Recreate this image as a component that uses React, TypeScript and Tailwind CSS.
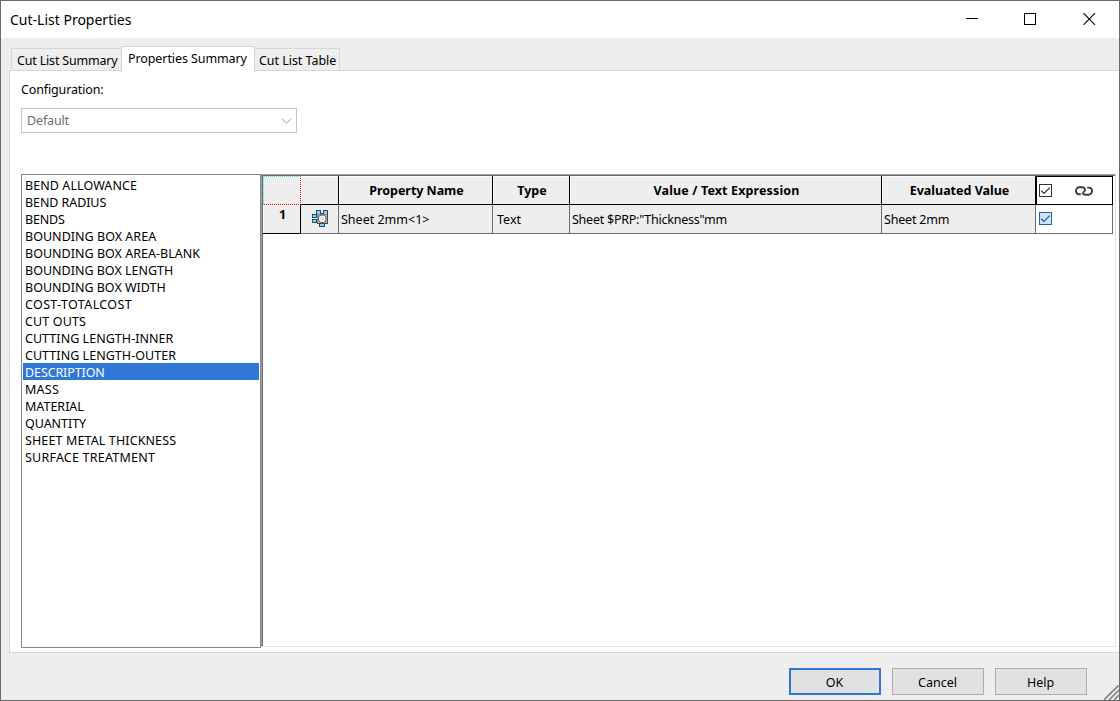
import React from "react";
import clsx from "clsx";

interface PropertyItem {
  name: string;
  tracking?: string;
}

const properties: PropertyItem[] = [
  { name: "BEND ALLOWANCE", tracking: "tracking-[0.08px]" },
  { name: "BEND RADIUS", tracking: "tracking-[-0.08px]" },
  { name: "BENDS", tracking: "tracking-[-0.2px]" },
  { name: "BOUNDING BOX AREA", tracking: "tracking-[0.03px]" },
  { name: "BOUNDING BOX AREA-BLANK", tracking: "tracking-[0.02px]" },
  { name: "BOUNDING BOX LENGTH" },
  { name: "BOUNDING BOX WIDTH" },
  { name: "COST-TOTALCOST", tracking: "tracking-[0.36px]" },
  { name: "CUT OUTS", tracking: "tracking-[0.14px]" },
  { name: "CUTTING LENGTH-INNER", tracking: "tracking-[0.04px]" },
  { name: "CUTTING LENGTH-OUTER", tracking: "tracking-[0.04px]" },
  { name: "DESCRIPTION", tracking: "tracking-[-0.1px]" },
  { name: "MASS", tracking: "tracking-[0.25px]" },
  { name: "MATERIAL" },
  { name: "QUANTITY", tracking: "tracking-[-0.05px]" },
  { name: "SHEET METAL THICKNESS", tracking: "tracking-[0.12px]" },
  { name: "SURFACE TREATMENT", tracking: "tracking-[0.22px]" },
];

const TitleBar: React.FC = () => (
  <header className="flex h-[37px] shrink-0 items-center justify-between bg-white pr-[23px] pl-[9px]">
    <h1 className="text-[14px] leading-5">Cut-List Properties</h1>
    <div className="flex items-center gap-[46px] pb-px">
      <button aria-label="Minimize">
        <svg width="12" height="12" className="block" shapeRendering="crispEdges">
          <path d="M0 5.5h12" stroke="#000" />
        </svg>
      </button>
      <button aria-label="Maximize">
        <svg width="12" height="12" className="block" shapeRendering="crispEdges">
          <rect x="0.5" y="0.5" width="11" height="11" fill="none" stroke="#000" />
        </svg>
      </button>
      <button aria-label="Close" className="ml-px">
        <svg width="13" height="12" className="block">
          <path d="M0.5 0.2 12 11.8M12 0.2 0.5 11.8" stroke="#000" strokeWidth="1.15" />
        </svg>
      </button>
    </div>
  </header>
);

const Tabs: React.FC = () => (
  <nav className="relative z-10 flex h-[25px] items-end pl-[10px]">
    <button className="h-[23px] w-[110px] border border-r-0 border-b-0 border-[#d6d6d6] pl-[5px] text-left tracking-[-0.18px] whitespace-nowrap">
      Cut List Summary
    </button>
    <button className="-mb-px h-[26px] w-[134px] border border-b-0 border-[#d6d6d6] bg-white pb-[3px] pl-[6px] text-left tracking-[-0.09px] whitespace-nowrap">
      Properties Summary
    </button>
    <button className="h-[23px] w-[85px] border border-b-0 border-l-0 border-[#d6d6d6] pl-[4px] text-left tracking-[-0.04px] whitespace-nowrap">
      Cut List Table
    </button>
  </nav>
);

const PropertyList: React.FC = () => (
  <ul className="h-[474px] w-[240px] shrink-0 border border-[#828790] px-px pt-px">
    {properties.map(({ name, tracking }) => (
      <li
        key={name}
        className={clsx(
          "h-[17px] pl-[2px] leading-[19px] whitespace-nowrap",
          tracking,
          name === "DESCRIPTION" && "bg-[#2f78d7] text-white"
        )}
      >
        {name}
      </li>
    ))}
  </ul>
);

const CutListIcon: React.FC = () => (
  <svg width="17" height="17" viewBox="0 0 17 17" className="ml-px" shapeRendering="crispEdges">
    <g fill="#8fd0f2" stroke="#1d4f73">
      <rect x="4.5" y="0.5" width="4" height="4" />
      <rect x="11.5" y="0.5" width="4" height="4" />
      <rect x="0.5" y="4.5" width="4" height="3" />
      <rect x="0.5" y="9.5" width="4" height="3" />
      <rect x="7.5" y="13.5" width="5" height="3" />
    </g>
    <path d="M8 3.5h4" stroke="#1d4f73" />
    <rect x="5" y="4" width="11" height="10" fill="#b4b4b4" />
    <path d="M5 4.5h10M5.5 4v9" stroke="#888" />
    <path d="M15.5 4v10M5 13.5h11" stroke="#4a4a4a" />
    <circle cx="10.2" cy="8.8" r="3.7" fill="#dcdcdc" stroke="#555" strokeWidth="1.1" shapeRendering="auto" />
    <circle cx="10.2" cy="8.8" r="2.7" fill="none" stroke="#fff" strokeWidth="1.1" shapeRendering="auto" />
  </svg>
);

const LinkIcon: React.FC = () => (
  <svg width="18" height="10" viewBox="0 0 18 10" fill="none" stroke="#3c3c3c" strokeWidth="1.9">
    <path d="M5.8 8.3H4.4C2.3 8.3 1 6.7 1 4.8S2.4 1.2 4.4 1.2h2.8c1.9 0 3.1 1.3 2.7 3.1-.2 1-.7 1.6-1.5 2" />
    <path d="M12.2 1.6h1.4c2.1 0 3.4 1.6 3.4 3.5s-1.4 3.6-3.4 3.6h-2.6c-1.9 0-3.3-.9-3.5-2.4" />
  </svg>
);

const Check: React.FC<{ active?: boolean }> = ({ active }) => (
  <span
    className={clsx(
      "block size-[13px] border",
      active ? "border-[#2461ae] bg-[#cce4f7] text-[#1f5cab]" : "border-[#333] bg-white text-[#333]"
    )}
  >
    <svg width="11" height="11" fill="none" stroke="currentColor" strokeWidth="1.2">
      <path d="M1.2 5.7 4 8.4 9.8 2.6" />
    </svg>
  </span>
);

const headCell =
  "flex h-[29px] items-center justify-center border-r border-b border-black pl-[2px] font-bold shadow-[inset_1px_1px_0_#fff]";
const bodyCell = "flex h-[29px] items-center border-r border-b border-[#6d6d6d] whitespace-nowrap";

const PropertyGrid: React.FC = () => (
  <div className="h-[473px] w-[855px] border-t border-r border-b border-l border-t-[#a0a0a0] border-r-[#e3e3e3] border-b-[#e3e3e3] border-l-[#a0a0a0]">
    <div className="h-full border-t border-l border-[#696969]">
      <div className="grid w-[850px] grid-cols-[38px_38px_154px_77px_312px_154px_77px] bg-[#eee]">
        {/* Header */}
        <div className="h-[29px] border border-dotted border-t-[#3fe6e6] border-r-[#f00] border-b-[#f00] border-l-[#3fe6e6]" />
        <div className={headCell} />
        <div className={clsx(headCell, "tracking-[-0.05px]")}>Property Name</div>
        <div className={headCell}>Type</div>
        <div className={clsx(headCell, "tracking-[0.13px]")}>Value / Text Expression</div>
        <div className={headCell}>Evaluated Value</div>
        <div className="flex h-[29px] items-center border border-black bg-white pl-[2px]">
          <Check />
          <span className="ml-[23px]">
            <LinkIcon />
          </span>
        </div>
        {/* Row */}
        <div className="flex h-[29px] justify-center border-r border-b border-black pt-px pl-[2px] font-bold shadow-[inset_1px_1px_0_#fff]">
          1
        </div>
        <div className={clsx(bodyCell, "justify-center pb-px")}>
          <CutListIcon />
        </div>
        <div className={clsx(bodyCell, "pl-[2px]")}>Sheet 2mm&lt;1&gt;</div>
        <div className={clsx(bodyCell, "pl-[4px]")}>Text</div>
        <div className={clsx(bodyCell, "pl-[2px] tracking-[-0.24px]")}>Sheet $PRP:"Thickness"mm</div>
        <div className={clsx(bodyCell, "pl-[2px] tracking-[-0.2px]")}>Sheet 2mm</div>
        <div className={clsx(bodyCell, "bg-white pb-px pl-[3px]")}>
          <Check active />
        </div>
      </div>
    </div>
  </div>
);

const DialogButton: React.FC<{ label: string; primary?: boolean }> = ({ label, primary }) => (
  <button
    className={clsx(
      "h-[27px] w-[92px] bg-[#e1e1e1] pt-px pr-px",
      primary ? "border-2 border-[#2f78d7]" : "border border-[#adadad]"
    )}
  >
    {label}
  </button>
);

export default function App() {
  return (
    <div className="flex h-[701px] w-[1120px] flex-col overflow-hidden border border-[#6b6b6b] bg-[#eee] font-['Noto_Sans','Open_Sans',sans-serif] text-[12.5px] leading-[17px] text-black">
      <TitleBar />
      <div className="pt-[8px]">
        <Tabs />
      </div>
      <main className="-mt-px ml-[8px] h-[583px] shrink-0 border border-r-0 border-[#d6d6d6] bg-white pl-[11px]">
        <div className="pt-[10px] tracking-[-0.14px]">Configuration:</div>
        <button className="mt-[10px] flex h-[25px] w-[276px] items-center justify-between border border-[#c4c4c4] pr-[4px] pl-[5px] tracking-[-0.15px] text-[#6d6d6d]">
          Default
          <svg width="11" height="6" fill="none" stroke="#999">
            <path d="M0.7 0.5 5.5 5.2 10.3 0.5" />
          </svg>
        </button>
        <div className="mt-[41px] flex">
          <PropertyList />
          <PropertyGrid />
        </div>
      </main>
      <footer className="relative flex justify-end gap-[11px] pt-[15px] pr-[32px]">
        <DialogButton label="OK" primary />
        <DialogButton label="Cancel" />
        <DialogButton label="Help" />
        <svg width="15" height="15" className="absolute right-0 bottom-[-5px]" fill="none">
          <path d="M0 15 15 0M5 15 15 5M10 15 15 10" stroke="#909090" strokeWidth="2" />
          <path d="M2 15.5 15.5 2M7 15.5 15.5 7" stroke="#fff" />
        </svg>
      </footer>
    </div>
  );
}
